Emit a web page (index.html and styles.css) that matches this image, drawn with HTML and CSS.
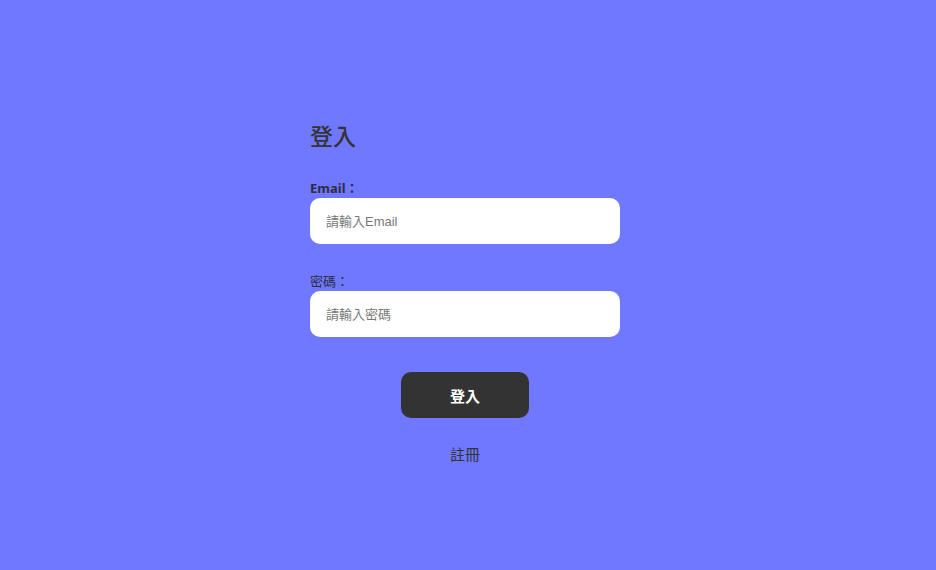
FILE: index.html
```html
<!DOCTYPE html>
<html lang="zh-Hant">
<head>
<meta charset="utf-8">
<title>登入</title>
<link rel="stylesheet" href="styles.css">
</head>
<body>
<main class="page">
  <form class="login">
    <h1 class="title">登入</h1>
    <label class="label label-bold" for="email">Email：</label>
    <input class="field" id="email" type="text" placeholder="請輸入Email">
    <label class="label" for="pw">密碼：</label>
    <input class="field" id="pw" type="password" placeholder="請輸入密碼">
    <button class="btn" type="button">登入</button>
    <a class="link" href="#">註冊</a>
  </form>
</main>
</body>
</html>
```
FILE: styles.css
```css
html, body {
  margin: 0;
  height: 100%;
  background: #6f78ff;
}
body {
  font-family: "Noto Sans", "Noto Sans CJK TC", sans-serif;
  color: #333;
}
.page {
  display: flex;
  justify-content: center;
  padding: 120px 6px 0 0;
}
.login {
  width: 310px;
  display: flex;
  flex-direction: column;
}
.title {
  margin: 0 0 26px;
  font-size: 23px;
  font-weight: 500;
  line-height: 32px;
  color: #333;
}
.label {
  font-size: 13px;
  line-height: 20px;
  color: #2d2d40;
}
.label-bold {
  font-weight: 700;
}
.field {
  box-sizing: border-box;
  width: 310px;
  height: 46px;
  margin: 0 0 27px;
  border: none;
  border-radius: 10px;
  padding: 0 16px;
  background: #fff;
  font-family: "Liberation Sans", "Noto Sans CJK TC", sans-serif;
  font-size: 13px;
  outline: none;
}
.field::placeholder {
  color: #777;
}
.btn {
  align-self: center;
  width: 128px;
  height: 46px;
  margin: 8px 0 0;
  border: none;
  border-radius: 10px;
  background: #333;
  color: #fff;
  font-family: "Noto Sans CJK TC", sans-serif;
  font-size: 15px;
  font-weight: 700;
}
.link {
  align-self: center;
  margin-top: 25px;
  font-size: 15px;
  line-height: 22px;
  color: #333;
  text-decoration: none;
}
```
